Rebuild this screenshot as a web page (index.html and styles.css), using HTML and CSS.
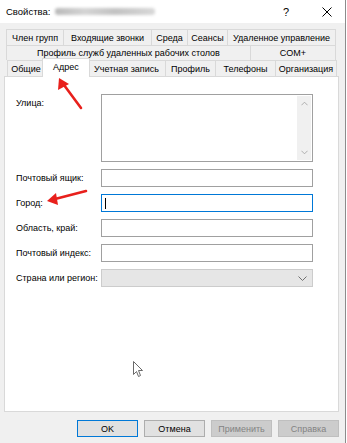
FILE: index.html
```html
<!DOCTYPE html>
<html lang="ru">
<head>
    <meta charset="UTF-8">
    <title>Свойства</title>
    <link rel="stylesheet" href="styles.css">
</head>
<body>
    <div class="window">
        <div class="titlebar">
            <span class="title">Свойства: </span>
            <span class="blurred"></span>
            <span class="help">?</span>
            <svg class="close" viewBox="0 0 10 10">
                <path d="M0.5 0.5 L9.5 9.5 M9.5 0.5 L0.5 9.5"/>
            </svg>
        </div>

        <div class="tabs">
            <div class="tab-row row1">
                <div class="tab">Член групп</div>
                <div class="tab">Входящие звонки</div>
                <div class="tab">Среда</div>
                <div class="tab">Сеансы</div>
                <div class="tab">Удаленное управление</div>
            </div>
            <div class="tab-row row2">
                <div class="tab">Профиль служб удаленных рабочих столов</div>
                <div class="tab">COM+</div>
            </div>
            <div class="tab-row row3">
                <div class="tab">Общие</div>
                <div class="tab selected">Адрес</div>
                <div class="tab">Учетная запись</div>
                <div class="tab">Профиль</div>
                <div class="tab">Телефоны</div>
                <div class="tab">Организация</div>
            </div>
        </div>

        <div class="panel">
            <div class="form">
                <div class="field street">
                    <label class="label">Улица:</label>
                    <div class="textarea">
                        <div class="text-body"></div>
                        <div class="scrollbar">
                            <svg class="chev" viewBox="0 0 8 5"><path d="M0.5 4.5 L4 1 L7.5 4.5"/></svg>
                            <svg class="chev" viewBox="0 0 8 5"><path d="M0.5 0.5 L4 4 L7.5 0.5"/></svg>
                        </div>
                    </div>
                </div>
                <div class="field">
                    <label class="label">Почтовый ящик:</label>
                    <div class="input"></div>
                </div>
                <div class="field">
                    <label class="label">Город:</label>
                    <div class="input focused"><span class="caret"></span></div>
                </div>
                <div class="field">
                    <label class="label">Область, край:</label>
                    <div class="input"></div>
                </div>
                <div class="field">
                    <label class="label">Почтовый индекс:</label>
                    <div class="input"></div>
                </div>
                <div class="field">
                    <label class="label">Страна или регион:</label>
                    <div class="input combo">
                        <svg class="combo-chev" viewBox="0 0 9 5"><path d="M0.5 0.5 L4.5 4.5 L8.5 0.5"/></svg>
                    </div>
                </div>
            </div>
        </div>

        <div class="buttons">
            <button class="btn default">OK</button>
            <button class="btn">Отмена</button>
            <button class="btn disabled">Применить</button>
            <button class="btn disabled">Справка</button>
        </div>

        <!-- annotation layer: red arrows and mouse pointer -->
        <svg class="annot" viewBox="0 0 346 443">
            <g class="arrow">
                <line x1="81" y1="108" x2="64" y2="85"/>
                <polygon points="59,78 58,90 69,84"/>
            </g>
            <g class="arrow">
                <line x1="86" y1="191" x2="55" y2="199"/>
                <polygon points="47,201 56,193 58,205"/>
            </g>
            <path class="pointer" d="M133.5 361.5 L133.5 374.5 L136.5 371.5 L138.5 376.5 L140.5 375.5 L138.5 370.5 L142.5 370.5 Z"/>
        </svg>
    </div>
</body>
</html>
```

FILE: styles.css
```css
body {
    margin: 0;
    background: #fff;
    font-family: 'Liberation Sans', Arial, sans-serif;
    font-size: 9px;
    color: #000;
}
.window {
    position: relative;
    width: 346px;
    height: 443px;
    box-sizing: border-box;
    border-right: 1px solid #8c8c8c;
    background: #f0f0f0;
}
.titlebar {
    height: 23px;
    background: #fff;
    display: flex;
    align-items: center;
    padding-left: 6px;
}
.title {
    font-size: 9.5px;
    white-space: pre;
}
.blurred {
    width: 100px;
    height: 7px;
    margin-left: 2px;
    border-radius: 3px;
    background: linear-gradient(90deg, #b9b9b9 0%, #d4d4d4 30%, #c2c2c2 60%, #d8d8d8 100%);
    filter: blur(1.5px);
}
.help {
    margin-left: auto;
    font-size: 11px;
    margin-right: 33px;
}
.close {
    width: 10px;
    height: 10px;
    margin-right: 13px;
    stroke: #000;
    stroke-width: 1;
    fill: none;
}
.tabs {
    padding: 6px 0 0 6px;
}
.tab-row {
    display: grid;
    height: 15px;
}
.row1 {
    grid-template-columns: 57px 88px 36px 40px 109px;
    height: 16px;
}
.row2 {
    grid-template-columns: 244px 86px;
}
.row3 {
    grid-template-columns: 37px 44px 77px 50px 60px 62px;
    margin-left: 1px;
    height: 16px;
}
.tab {
    border-top: 1px solid #d9d9d9;
    border-left: 1px solid #d9d9d9;
    display: flex;
    align-items: center;
    justify-content: center;
    white-space: nowrap;
    background: #f0f0f0;
}
.tab:last-child {
    border-right: 1px solid #d9d9d9;
}
.tab.selected {
    position: relative;
    z-index: 1;
    margin: -2px -2px -1px -2px;
    padding-bottom: 3px;
    border-right: 1px solid #d9d9d9;
    background: #fff;
}
.tab.selected + .tab {
    border-left: none;
}
.panel {
    margin-left: 4px;
    width: 335px;
    height: 336px;
    box-sizing: border-box;
    background: #fff;
    border: 1px solid #d9d9d9;
    padding: 17px 0 0 11px;
}
.form {
    display: flex;
    flex-direction: column;
    gap: 7px;
}
.field {
    display: grid;
    grid-template-columns: 85px 212px;
    height: 18px;
    align-items: center;
}
.field.street {
    height: 68px;
    align-items: start;
}
.street .label {
    margin-top: 4px;
}
.textarea {
    height: 68px;
    box-sizing: border-box;
    border: 1px solid #a0a0a0;
    display: flex;
}
.text-body {
    flex: 1;
}
.scrollbar {
    width: 14px;
    margin: 1px 1px 1px 0;
    background: #f0f0f0;
    display: flex;
    flex-direction: column;
    justify-content: space-between;
    align-items: center;
    padding: 5px 0;
}
.chev {
    width: 7px;
    height: 5px;
    stroke: #a6a6a6;
    stroke-width: 1;
    fill: none;
}
.input {
    height: 18px;
    box-sizing: border-box;
    border: 1px solid #a0a0a0;
    display: flex;
    align-items: center;
}
.input.focused {
    border-color: #0078d7;
}
.caret {
    width: 1px;
    height: 11px;
    margin-left: 3px;
    background: #000;
}
.input.combo {
    background: #e6e6e6;
    border-color: #cccccc;
    justify-content: flex-end;
}
.combo-chev {
    width: 9px;
    height: 5px;
    margin-right: 5px;
    stroke: #707070;
    stroke-width: 1;
    fill: none;
}
.buttons {
    display: flex;
    justify-content: flex-end;
    gap: 6px;
    padding: 8px 6px 0 0;
}
.btn {
    width: 61px;
    height: 17px;
    box-sizing: border-box;
    margin: 0;
    padding: 0;
    font-family: inherit;
    font-size: 9px;
    color: #000;
    background: #e1e1e1;
    border: 1px solid #adadad;
}
.btn.default {
    border-color: #0078d7;
}
.btn.disabled {
    color: #838383;
    background: #cccccc;
    border-color: #bfbfbf;
}
.annot {
    position: absolute;
    left: 0;
    top: 0;
    width: 346px;
    height: 443px;
    pointer-events: none;
}
.arrow line {
    stroke: #e8201c;
    stroke-width: 2.6;
    stroke-linecap: round;
}
.arrow polygon {
    fill: #e8201c;
}
.pointer {
    fill: #fff;
    stroke: #6a6a6a;
    stroke-width: 1;
    stroke-linejoin: round;
}
```
